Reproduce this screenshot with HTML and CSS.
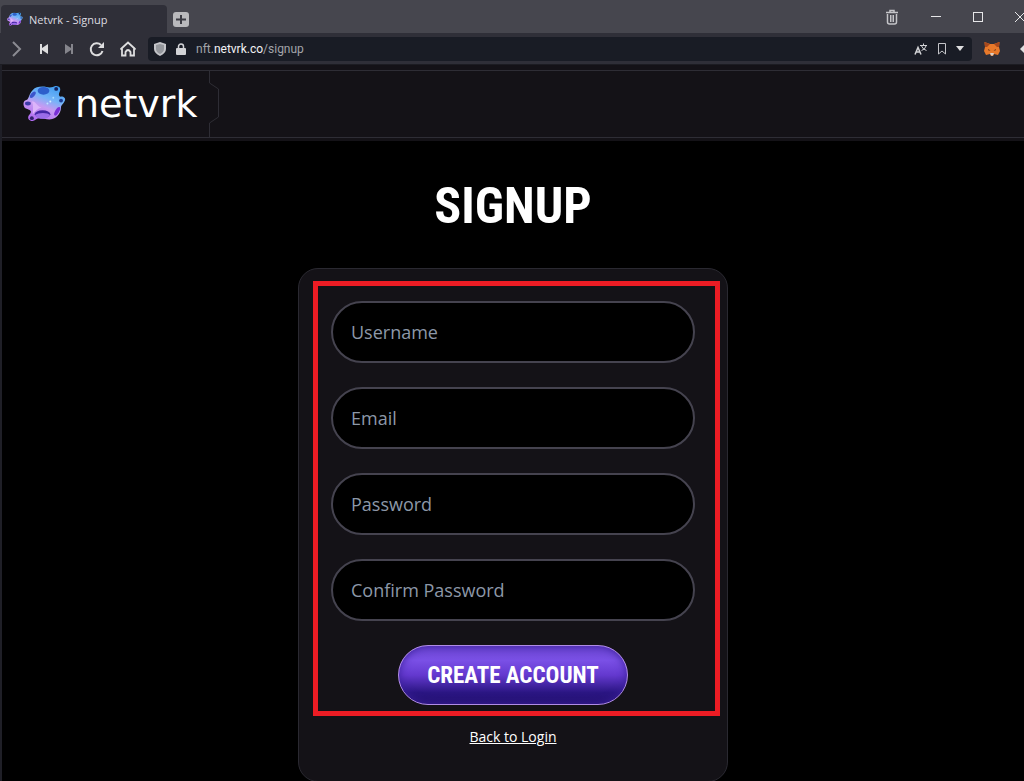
FILE: index.html
```html
<!DOCTYPE html>
<html lang="en">

<head>
    <meta charset="UTF-8">
    <meta name="viewport" content="width=device-width, initial-scale=1.0">
    <title>Netvrk - Signup</title>
    <link rel="stylesheet" href="styles.css">
</head>

<body>
    <svg class="defs" width="0" height="0" aria-hidden="true">
        <defs>
            <linearGradient id="planet-fill" x1="0.75" y1="0" x2="0.3" y2="1">
                <stop offset="0" stop-color="#3f9df0"></stop>
                <stop offset="0.35" stop-color="#74b4f8"></stop>
                <stop offset="0.6" stop-color="#c79af2"></stop>
                <stop offset="1" stop-color="#b06af0"></stop>
            </linearGradient>
            <symbol id="planet" viewBox="0 0 44 38">
                <path fill="url(#planet-fill)" d="M10 4C13 1 18 0 24 1C28 2 31 1 33 0C36 -0 39 1 38 5C37 8 36 9 38 11C41 10 44 12 43 15C42 18 40 19 39 21C39 27 36 32 30 34C25 35 21 33 17 33C14 33 13 35 10 36C6 36 4 33 6 30C8 28 9 26 7 25C5 23 2 24 1 21C0 18 0 15 4 14C6 13 6 8 10 4Z"></path>
                <ellipse cx="21" cy="5" rx="6" ry="4" fill="#2d5fcb"></ellipse>
                <ellipse cx="10" cy="9" rx="2" ry="4" transform="rotate(40 10 9)" fill="#3b55cc"></ellipse>
                <ellipse cx="34" cy="3" rx="2" ry="2" fill="#15225e"></ellipse>
                <ellipse cx="39" cy="15" rx="2" ry="2" fill="#1d3b91"></ellipse>
                <ellipse cx="35" cy="26" rx="2" ry="5" transform="rotate(30 35 26)" fill="#7a2fd6"></ellipse>
                <ellipse cx="20" cy="29" rx="8" ry="4" fill="#4427a5"></ellipse>
                <path fill="#9a6ce8" d="M12 30C16 27 25 27 28 30C24 35 16 35 12 30Z"></path>
                <ellipse cx="5" cy="18" rx="3" ry="2" fill="#3d3aa8"></ellipse>
                <ellipse cx="9" cy="33" rx="2" ry="2" fill="#33206f"></ellipse>
                <path fill="#dcb4fa" d="M9 16C13 15 14 21 19 22C15 23 12 26 10 29C10 24 11 20 9 16Z"></path>
                <circle cx="28" cy="16" r="1" fill="#d5f0ff"></circle>
                <circle cx="31" cy="12" r="1" fill="#a5dcff"></circle>
                <circle cx="25" cy="18" r="1" fill="#bfe2ff"></circle>
            </symbol>
        </defs>
    </svg>

    <div class="browser">
        <div class="tab-bar">
            <div class="tab">
                <svg class="tab-icon" viewBox="0 0 44 38"><use href="#planet"></use></svg>
                <span>Netvrk - Signup</span>
            </div>
            <button class="new-tab" aria-label="New tab">
                <svg width="16" height="16" viewBox="0 0 16 16"><rect width="16" height="15" rx="3" fill="#b9b9bc"></rect><path d="M8 3V12M3 7.5H13" stroke="#3b3b43" stroke-width="2"></path></svg>
            </button>
            <div class="window-buttons">
                <button aria-label="Closed tabs">
                    <svg width="14" height="16" viewBox="0 0 14 16" fill="none" stroke="#c4c4c8"><path stroke-width="1.500" d="M1 3.500H13M5 3V1.500H9V3M2.500 5V13Q2.500 15 4.500 15H9.500Q11.500 15 11.500 13V5"></path><path d="M5.500 6V13M7 6V13M8.500 6V13"></path></svg>
                </button>
                <button aria-label="Minimize">
                    <svg width="10" height="10" viewBox="0 0 10 10"><path d="M0 4.500H10" stroke="#e6e6e8"></path></svg>
                </button>
                <button aria-label="Maximize">
                    <svg width="10" height="10" viewBox="0 0 10 10"><rect x="0.500" y="0.500" width="9" height="9" fill="none" stroke="#e6e6e8"></rect></svg>
                </button>
                <button aria-label="Close">
                    <svg width="10" height="10" viewBox="0 0 10 10"><path d="M0 0L10 10M10 0L0 10" stroke="#e6e6e8"></path></svg>
                </button>
            </div>
        </div>

        <div class="toolbar">
            <div class="nav-buttons">
                <button aria-label="Forward">
                    <svg width="16" height="16" viewBox="0 0 16 16"><path d="M5 1L12 8L5 15" fill="none" stroke="#8b8b92" stroke-width="2"></path></svg>
                </button>
                <button aria-label="Rewind">
                    <svg width="10" height="16" viewBox="0 0 10 16" fill="#dededf"><path d="M1 3H3V7L9 3V13L3 9V13H1Z"></path></svg>
                </button>
                <button aria-label="Fast forward">
                    <svg width="10" height="16" viewBox="0 0 10 16" fill="#85858c"><path d="M9 3H7V7L1 3V13L7 9V13H9Z"></path></svg>
                </button>
                <button aria-label="Reload">
                    <svg width="16" height="16" viewBox="0 0 16 16"><path d="M12 4A6 6 0 1 0 13.500 10" fill="none" stroke="#dededf" stroke-width="2"></path><path d="M15 1V7H9Z" fill="#dededf"></path></svg>
                </button>
                <button aria-label="Home">
                    <svg width="16" height="16" viewBox="0 0 16 16"><path d="M2 7L8 1.500L14 7V14.500H10.500V11Q8 7 5.500 11V14.500H2V7M0.500 8.500L2 7M15.500 8.500L14 7" fill="none" stroke="#dededf" stroke-width="1.800"></path></svg>
                </button>
            </div>
            <div class="address">
                <svg width="12" height="14" viewBox="0 0 12 14"><path d="M6 0L12 2V7Q12 11 6 14Q0 11 0 7V2Z" fill="#c4c5c9"></path><path d="M6 2L10 3V7Q10 10 6 12Q2 10 2 7V3Z" fill="#94979c"></path></svg>
                <svg width="10" height="12" viewBox="0 0 10 12"><path d="M2.500 6V3.500A2.500 2.500 0 0 1 7.500 3.500V6" fill="none" stroke="#d2d3d6" stroke-width="1.500"></path><rect y="5" width="10" height="7" rx="1" fill="#d2d3d6"></rect></svg>
                <div class="url" role="textbox" aria-label="Address" contenteditable="true" spellcheck="false">nft.<span class="domain">netvrk.co</span>/signup</div>
                <button aria-label="Translate">
                    <svg width="14" height="12" viewBox="0 0 14 12" fill="none" stroke="#d2d3d6"><path stroke-width="1.500" d="M1 11.500L4 4.500L7 11.500M2 9H6"></path><path d="M6 2.500H13M9.500 0.500V2.500M7.500 3Q9 6.500 12.500 7.500M12 3Q11 6.500 7.500 7.500"></path></svg>
                </button>
                <button aria-label="Bookmark">
                    <svg width="8" height="12" viewBox="0 0 8 12"><path d="M0.500 0.500H7.500V11L4 8L0.500 11Z" fill="none" stroke="#c4c5c9"></path></svg>
                </button>
                <button aria-label="Show history">
                    <svg width="8" height="5" viewBox="0 0 8 5"><path d="M0 0H8L4 5Z" fill="#dededf"></path></svg>
                </button>
            </div>
            <button class="extension" aria-label="Wallet">
                <svg width="16" height="14" viewBox="0 0 16 14"><path d="M0.500 0L6 2H10L15.500 0L15 5L16 9L14 13L10 12L9 14H7L6 12L2 13L0 9L1 5Z" fill="#e8792a"></path><path d="M0.500 0L6 2L3 5L1 5ZM15.500 0L10 2L13 5L15 5Z" fill="#a8491d"></path><path d="M4 7L6.500 8.500L4.500 8.500ZM12 7L9.500 8.500L11.500 8.500Z" fill="#4a2a1c"></path><path d="M6 11H10L9 13.500H7Z" fill="#d9cfc6"></path></svg>
            </button>
            <button class="more" aria-label="More extensions">
                <svg width="8" height="8" viewBox="0 0 8 8"><path d="M4 0L8 4L4 8L0 4Z" fill="#dededf"></path></svg>
            </button>
        </div>
    </div>

    <div class="page">
        <header class="site-header">
            <div class="header-inner">
                <a class="logo" href="#">
                    <svg class="logo-icon" viewBox="0 0 44 38"><use href="#planet"></use></svg>
                    <span class="logo-text">netvrk</span>
                </a>
                <svg class="notch" width="11" height="66" viewBox="0 0 11 66"><path d="M0.500 0V12L9.500 18V46L0.500 52V66" fill="none" stroke="#2e2d35"></path></svg>
            </div>
        </header>

        <main>
            <h1>SIGNUP</h1>
            <div class="card">
                <form class="signup-form">
                    <input type="text" aria-label="Username" placeholder="Username">
                    <input type="email" aria-label="Email" placeholder="Email">
                    <input type="password" aria-label="Password" placeholder="Password">
                    <input type="password" aria-label="Confirm Password" placeholder="Confirm Password">
                    <button class="create-btn" type="button">CREATE ACCOUNT</button>
                </form>
                <a class="login-link" href="#">Back to Login</a>
                <div class="highlight"></div>
            </div>
        </main>
    </div>
</body>

</html>
```

FILE: styles.css
```css
* {
    box-sizing: border-box;
}

body {
    margin: 0;
    background-color: #000;
    color: #fff;
    font-family: "Open Sans", sans-serif;
}

button {
    padding: 0;
    border: none;
    background: none;
    cursor: pointer;
}

svg {
    display: block;
    flex: none;
}

.defs {
    position: absolute;
}

/* Browser window */
.browser {
    overflow: hidden;
    font-size: 11px;
}

.tab-bar {
    display: flex;
    height: 33px;
    background-color: #46464e;
}

.tab {
    display: flex;
    align-items: center;
    gap: 6px;
    width: 166px;
    margin: 5px 0 0 1px;
    padding: 0 6px;
    border-radius: 4px 4px 0 0;
    background-color: #2f2f38;
    color: #dcdce0;
}

.tab-icon {
    width: 16px;
    height: 15px;
}

.new-tab {
    margin: 6px 0 0 6px;
}

.window-buttons {
    display: flex;
    align-items: center;
    gap: 32px;
    margin-left: auto;
    margin-right: -1px;
}

.toolbar {
    display: flex;
    align-items: center;
    height: 32px;
    padding-left: 8px;
    background-color: #2f2f38;
    border-bottom: 1px solid #1c1c22;
}

.nav-buttons {
    display: flex;
    gap: 15px;
    padding-right: 12px;
}

.address {
    flex: 1;
    display: flex;
    align-items: center;
    gap: 10px;
    height: 24px;
    padding: 0 8px 0 6px;
    border-radius: 4px;
    background-color: #191c25;
}

.url {
    flex: 1;
    color: #a2a4a9;
    font-family: Roboto, sans-serif;
    font-size: 12px;
    outline: none;
}

.domain {
    color: #f2f2f4;
}

.extension {
    margin: 0 20px 0 12px;
}

.more {
    margin-right: -4px;
}

/* Site */
.page {
    border-left: 2px solid #1f1f27;
}

.site-header {
    padding: 5px 0 3px;
    background-color: #141217;
}

.header-inner {
    display: flex;
    border-top: 1px solid #2e2d35;
    border-bottom: 1px solid #2e2d35;
}

.logo {
    display: flex;
    align-items: center;
    gap: 9px;
    height: 66px;
    padding: 0 12px 0 21px;
    color: #fff;
    text-decoration: none;
}

.logo-icon {
    width: 43px;
    height: 37px;
}

.logo-text {
    font-family: "DejaVu Sans", sans-serif;
    font-size: 38px;
    line-height: 36px;
}

main {
    display: flex;
    flex-direction: column;
    align-items: center;
}

h1 {
    margin: 35px 0 32px;
    font-family: "Roboto Condensed", Roboto, sans-serif;
    font-size: 50px;
    line-height: 60px;
}

.card {
    position: relative;
    display: flex;
    flex-direction: column;
    align-items: center;
    width: 100%;
    max-width: 430px;
    padding: 32px;
    border: 1px solid #2a2931;
    border-radius: 20px;
    background-color: #141217;
}

.signup-form {
    display: flex;
    flex-direction: column;
    align-items: center;
    gap: 24px;
    width: 100%;
}

.signup-form input {
    width: 100%;
    height: 62px;
    padding: 0 18px;
    border: 2px solid #45434f;
    border-radius: 31px;
    background-color: #000;
    color: #fff;
    font-family: "Open Sans", sans-serif;
    font-size: 18px;
}

.signup-form input::placeholder {
    color: #8d98a8;
}

.create-btn {
    height: 60px;
    padding: 0 28px;
    border: 1px solid #b08be6;
    border-radius: 30px;
    background: linear-gradient(#6a45cf, #7a50e6 25%, #6439cf 50%, #2b1683 80%, #22106e);
    box-shadow: inset 0 0 8px #3a1f9c;
    color: #fff;
    font-family: "Roboto Condensed", Roboto, sans-serif;
    font-size: 23px;
    font-weight: bold;
}

.login-link {
    margin-top: 20px;
    color: #fff;
    font-size: 14px;
    line-height: 24px;
}

/* Red frame over the form */
.highlight {
    position: absolute;
    inset: 12px 7px 65px 14px;
    border: 5px solid #ec1c24;
    pointer-events: none;
}
```
